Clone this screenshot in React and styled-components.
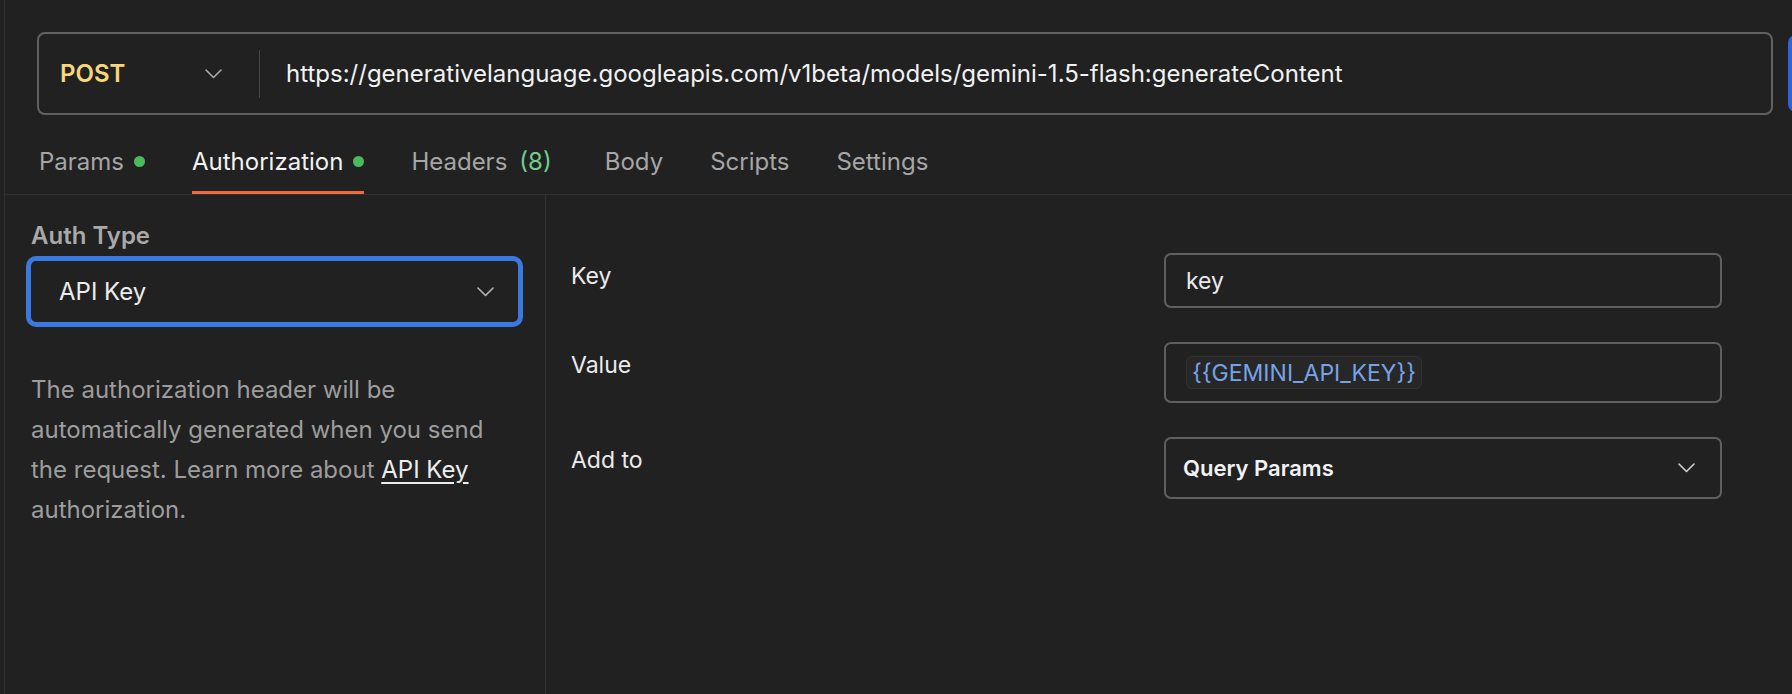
import React from 'react';
import styled, { createGlobalStyle } from 'styled-components';

const GlobalStyle = createGlobalStyle`
  html, body {
    margin: 0;
    padding: 0;
    background: #212121;
  }

  body {
    font-family: Inter, "Noto Sans", sans-serif;
    color: #ececec;
  }
`;

const Page = styled.div`
  background: #212121;
  box-sizing: border-box;
  height: 694px;
  overflow: hidden;
  padding-left: 4px;
`;

const Frame = styled.div`
  border-left: 1px solid #2f2f2f;
  display: flex;
  flex-direction: column;
  height: 100%;
`;

const UrlRow = styled.div`
  align-items: center;
  display: flex;
  gap: 15px;
  padding: 32px 0 0 32px;
`;

const UrlBox = styled.div`
  align-items: center;
  border: 2px solid #616161;
  border-radius: 8px;
  box-sizing: border-box;
  display: flex;
  flex-shrink: 0;
  height: 83px;
  width: 1736px;
`;

const MethodPicker = styled.div`
  align-items: center;
  box-sizing: border-box;
  display: flex;
  justify-content: space-between;
  padding: 0 37px 0 21px;
  width: 220px;
`;

const Method = styled.span`
  color: #f6d77c;
  font-size: 24px;
  font-weight: 600;
`;

const Divider = styled.div`
  background: #454545;
  height: 48px;
  width: 1px;
`;

const UrlText = styled.span`
  color: #f2f2f2;
  font-size: 24px;
  margin-left: 26px;
  white-space: nowrap;
`;

const SendButton = styled.div`
  background: #2c64d9;
  border-radius: 8px 0 0 8px;
  flex-shrink: 0;
  height: 77px;
  width: 120px;
`;

const TabBar = styled.nav`
  align-items: flex-end;
  border-bottom: 1px solid #303030;
  box-sizing: border-box;
  display: flex;
  gap: 47px;
  height: 80px;
  padding-left: 34px;
`;

const Tab = styled.div`
  align-items: center;
  border-bottom: 3px solid ${({ active }) => (active ? '#ee6b3f' : 'transparent')};
  color: ${({ active }) => (active ? '#f2f2f2' : '#a6a6a6')};
  display: flex;
  font-size: 24px;
  gap: 10px;
  line-height: 29px;
  margin-right: ${({ extra }) => extra || 0}px;
  padding-bottom: 15px;
`;

const Dot = styled.span`
  background: #4cba5c;
  border-radius: 50%;
  display: inline-block;
  height: 11px;
  width: 11px;
`;

const Count = styled.span`
  color: #73cc8e;
  margin-left: 12px;
`;

const Body = styled.div`
  display: flex;
  flex: 1;
`;

const AuthPanel = styled.aside`
  border-right: 1px solid #313131;
  box-sizing: border-box;
  padding: 26px 22px 0 21px;
  width: 541px;
`;

const PanelLabel = styled.div`
  color: #a9a9a9;
  font-size: 24px;
  font-weight: 600;
  margin: 0 0 6px 5px;
`;

const AuthSelect = styled.div`
  align-items: center;
  border: 5px solid #3a79e0;
  border-radius: 10px;
  box-sizing: border-box;
  display: flex;
  font-size: 24px;
  height: 71px;
  justify-content: space-between;
  padding: 0 24px 0 28px;
`;

const Hint = styled.p`
  color: #9d9d9d;
  font-size: 24px;
  line-height: 40px;
  margin: 43px 0 0 5px;
  max-width: 490px;
`;

const HintLink = styled.a`
  color: #ededed;
  text-decoration: underline;
  text-underline-offset: 4px;
`;

const FieldsPanel = styled.section`
  flex: 1;
  padding: 58px 70px 0 25px;
`;

const FieldGrid = styled.div`
  display: grid;
  grid-template-columns: 593px 1fr;
  row-gap: 34px;
`;

const FieldLabel = styled.div`
  color: #ececec;
  font-size: 23px;
  padding-top: 9px;
`;

const Field = styled.div`
  align-items: center;
  border: 2px solid #5f5f5f;
  border-radius: 7px;
  box-sizing: border-box;
  display: flex;
  font-size: 23px;
  height: ${({ h }) => h}px;
  justify-content: space-between;
  padding: ${({ select }) => (select ? '0 25px 0 17px' : '0 20px')};
`;

const VarChip = styled.span`
  align-items: center;
  background: #272727;
  border: 1px solid #333333;
  border-radius: 6px;
  box-sizing: border-box;
  color: #76a3e8;
  display: inline-flex;
  font-size: 23px;
  height: 33px;
  padding: 0 5px;
`;

const SelectValue = styled.span`
  color: #f2f2f2;
  font-size: 22px;
  font-weight: 600;
`;

function Chevron({ color = '#b5b5b5' }) {
  return (
    <svg width="17" height="10" viewBox="0 0 17 10" fill="none">
      <path d="M1 1l7.5 7.5L16 1" stroke={color} strokeWidth="1.6" strokeLinecap="round" strokeLinejoin="round" />
    </svg>
  );
}

const tabs = [
  { label: 'Params', dot: true },
  { label: 'Authorization', dot: true, active: true },
  { label: 'Headers', count: 8, extra: 6 },
  { label: 'Body' },
  { label: 'Scripts' },
  { label: 'Settings' },
];

export default function App() {
  return (
    <Page>
      <GlobalStyle />
      <Frame>
        <UrlRow>
          <UrlBox>
            <MethodPicker>
              <Method>POST</Method>
              <Chevron color="#a8a8a8" />
            </MethodPicker>
            <Divider />
            <UrlText>https://generativelanguage.googleapis.com/v1beta/models/gemini-1.5-flash:generateContent</UrlText>
          </UrlBox>
          <SendButton />
        </UrlRow>

        <TabBar>
          {tabs.map(tab => (
            <Tab key={tab.label} active={tab.active} extra={tab.extra}>
              <span>
                {tab.label}
                {tab.count != null && <Count>({tab.count})</Count>}
              </span>
              {tab.dot && <Dot />}
            </Tab>
          ))}
        </TabBar>

        <Body>
          <AuthPanel>
            <PanelLabel>Auth Type</PanelLabel>
            <AuthSelect>
              <span>API Key</span>
              <Chevron />
            </AuthSelect>
            <Hint>
              The authorization header will be automatically generated when you send the request. Learn more about{' '}
              <HintLink>API Key</HintLink> authorization.
            </Hint>
          </AuthPanel>

          <FieldsPanel>
            <FieldGrid>
              <FieldLabel>Key</FieldLabel>
              <Field h={55}>key</Field>

              <FieldLabel>Value</FieldLabel>
              <Field h={61}>
                <VarChip>{'{{GEMINI_API_KEY}}'}</VarChip>
              </Field>

              <FieldLabel>Add to</FieldLabel>
              <Field h={62} select>
                <SelectValue>Query Params</SelectValue>
                <Chevron color="#d0d0d0" />
              </Field>
            </FieldGrid>
          </FieldsPanel>
        </Body>
      </Frame>
    </Page>
  );
}
